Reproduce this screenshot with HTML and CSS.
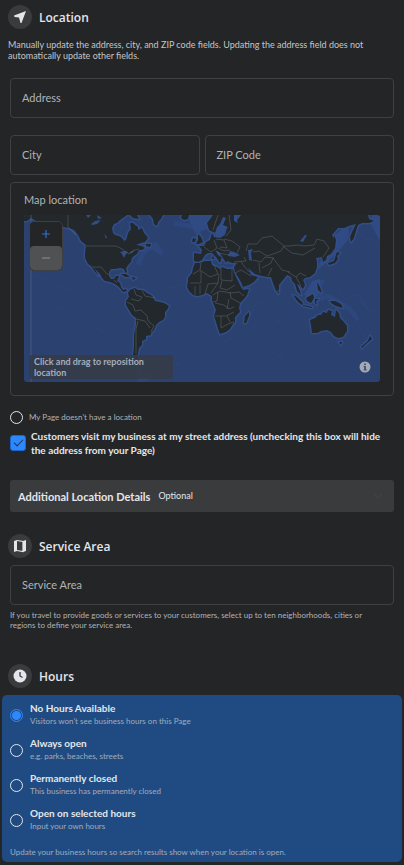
FILE: index.html
```html
<!DOCTYPE html>
<html lang="en">
<head>
    <meta charset="UTF-8">
    <meta name="viewport" content="width=device-width, initial-scale=1.0">
    <title>Edit Page Info</title>
    <link rel="stylesheet" href="styles.css">
</head>
<body>
    <main class="page">
        <!-- Location -->
        <section class="section">
            <header class="section-header">
                <span class="icon-circle">
                    <svg width="14" height="14" viewBox="0 0 14 14"><path d="M13 1 L1 5.500 L1.500 7 L6 7.500 L7.500 13 L8.500 13 Z" fill="#e4e6eb"/></svg>
                </span>
                <h2>Location</h2>
            </header>
            <p class="intro">Manually update the address, city, and ZIP code fields. Updating the address field does not automatically update other fields.</p>

            <form class="fields">
                <div class="field">
                    <label for="address">Address</label>
                    <input type="text" id="address">
                </div>
                <div class="field-row">
                    <div class="field">
                        <label for="city">City</label>
                        <input type="text" id="city">
                    </div>
                    <div class="field">
                        <label for="zip">ZIP Code</label>
                        <input type="text" id="zip">
                    </div>
                </div>
            </form>

            <div class="map-card">
                <h3>Map location</h3>
                <div class="map">
                    <svg class="map-svg" viewBox="0 0 356 167" preserveAspectRatio="xMidYMid slice">
                        <defs>
                            <g id="land">
                                <!-- North America -->
                                <path d="M0 0 H103 L99 3 L96 5 L93 8 L90 9 L88 13 L89 18 L91 20 L95 21 L98 23 L100 26 L102 25 L103 22 L104 18 L107 14 L106 8 L109 8 L111 10 L114 12 L114 15 L118 13 L120 18 L122 20 L124 23 L121 27 L117 28 L112 30 L118 31 L121 33 L118 35 L115 35 L113 39 L110 41 L108 43 L107 47 L105 49 L102 53 L103 58 L101 57 L100 54 L96 53 L91 54 L87 54 L85 57 L85 61 L87 64 L90 64 L92 61 L95 61 L93 66 L96 68 L97 72 L99 75 L102 74 L103 76 L99 77 L95 72 L91 69 L86 67 L81 66 L78 63 L76 59 L72 55 L69 51 L73 58 L75 61 L71 57 L67 51 L64 49 L61 43 L61 38 L62 30 L57 26 L54 20 L50 15 L45 13 L39 12 L34 10 L29 11 L24 14 L15 16 L22 11 L17 8 L12 6 L7 3 L3 6 L0 6 Z"/>
                                <path d="M126 0 H139 L137 4 L134 7 L133 11 L130 9 L129 4 Z M158 0 H165 L164 4 L160 5 L157 3 Z M106 0 L113 0 L115 4 L109 3 Z M122 29 L127 29 L126 32 L122 31 Z M97 59 L102 59 L106 62 L101 62 Z M108 62 L112 63 L109 65 Z"/>
                                <!-- South America -->
                                <path d="M104 78 L106 75 L111 73 L114 75 L119 75 L123 78 L127 80 L129 82 L131 86 L136 87 L140 88 L145 91 L143 95 L141 97 L141 102 L139 105 L135 107 L132 110 L130 115 L127 118 L127 120 L122 121 L122 124 L118 126 L118 130 L115 133 L114 138 L113 141 L116 145 L111 144 L109 140 L110 132 L110 120 L112 110 L112 103 L108 100 L105 95 L102 90 L102 86 L105 82 Z"/>
                                <!-- Africa -->
                                <path d="M171 48 L176 48 L181 46 L187 46 L188 50 L193 52 L196 54 L198 52 L203 54 L209 54 L211 60 L214 66 L217 72 L219 75 L225 74 L223 80 L220 84 L216 88 L215 93 L216 97 L211 102 L211 107 L209 109 L206 114 L202 117 L196 119 L194 114 L192 107 L190 101 L192 95 L189 88 L188 85 L188 81 L183 78 L178 80 L173 81 L169 80 L165 76 L163 72 L164 66 L164 63 L168 58 L169 53 Z"/>
                                <path d="M221 101 L225 97 L225 101 L222 108 L220 108 Z"/>
                                <!-- Europe and Asia -->
                                <path d="M189 0 H344 L345 4 L350 6 L345 8 L338 8 L334 10 L332 16 L330 23 L327 27 L326 22 L329 15 L332 9 L328 10 L325 11 L320 13 L314 13 L308 20 L311 25 L311 33 L307 39 L303 41 L302 45 L299 47 L298 42 L292 43 L293 47 L293 52 L291 58 L286 62 L281 63 L279 65 L281 70 L279 74 L275 70 L273 69 L276 76 L277 80 L273 76 L271 69 L268 66 L267 62 L263 60 L259 65 L255 70 L255 75 L252 76 L249 68 L247 62 L244 62 L238 61 L231 59 L224 53 L227 60 L230 61 L234 62 L230 67 L225 70 L219 72 L217 67 L211 57 L210 52 L213 48 L208 48 L203 46 L202 48 L199 43 L195 37 L191 35 L194 40 L198 43 L195 46 L192 42 L188 38 L184 38 L181 40 L178 45 L174 47 L170 46 L170 38 L177 39 L178 35 L175 31 L180 31 L182 27 L186 25 L188 18 L190 22 L196 23 L201 20 L203 13 L196 12 L192 18 L189 17 L185 15 L183 8 Z"/>
                                <path d="M174 19 L177 22 L179 27 L175 29 L172 29 L174 25 Z M169 23 L172 24 L171 27 L168 27 Z M194 45 L197 45 L196 48 Z M189 40 L190 44 L188 44 Z"/>
                                <!-- Islands and Australia -->
                                <path d="M313 37 L316 38 L313 41 L314 44 L311 48 L305 50 L304 48 L310 46 Z M310 20 L312 25 L311 33 L310 27 Z M269 80 L273 82 L279 88 L278 90 L274 87 Z M279 90 L288 92 L288 93 L279 91 Z M282 83 L289 79 L290 83 L287 88 L283 86 Z M291 84 L295 84 L292 86 L293 90 L291 88 Z M293 67 L296 72 L298 78 L294 75 Z M306 86 L311 86 L317 89 L319 93 L312 91 L307 88 Z M253 75 L255 77 L254 79 Z M346 121 L348 124 L342 129 L338 133 L337 132 L344 126 Z M315 127 L318 127 L317 130 Z"/>
                                <path d="M286 105 L291 103 L294 100 L297 100 L299 97 L303 98 L304 95 L308 96 L307 100 L311 102 L312 95 L315 98 L316 103 L320 107 L323 111 L323 116 L319 122 L314 123 L310 121 L307 117 L303 115 L297 116 L293 118 L288 118 L287 110 Z"/>
                            </g>
                        </defs>
                        <rect width="356" height="167" fill="#2b416f"/>
                        <g fill="none" stroke="#2d467b" stroke-width="5" stroke-linejoin="round">
                            <path d="M114 50 L119 38 L128 31 L137 38 L130 28 M113 145 L116 167 L128 160 M150 8 L170 12 L176 21 M300 80 L312 85 L326 94 L334 105 M300 65 L290 75 L300 85"/>
                        </g>
                        <path d="M311 20 L318 14 L325 13 L324 25 L313 38 L300 50 L293 55 L298 42 L308 39 Z M348 0 H356 V26 L346 8 Z M165 0 H190 L183 14 L172 18 L166 8 Z M288 66 L296 64 L298 76 L290 84 L280 80 Z" fill="#304b84"/>
                        <g fill="none" stroke="#304b84" stroke-opacity=".5" stroke-width="1">
                            <path d="M10 59 l12 6 M32 70 l14 6 M28 90 l9 4 M68 112 l13 5 M146 73 l13 -4 M225 102 l8 -15 l7 4 M251 108 l7 -4 M248 136 l10 7 l-5 6 M195 130 l15 -9 M148 146 l13 7 M332 15 l8 8 l14 3 M345 83 l-8 5 l13 9 M314 75 l7 9 l14 -4 l10 17 M332 108 l10 14 l-7 18"/>
                        </g>
                        <use href="#land" fill="none" stroke="#314e88" stroke-width="3" stroke-linejoin="round"/>
                        <use href="#land" fill="#22282b"/>
                        <!-- Inland seas and lakes -->
                        <g fill="#314e88">
                            <path d="M67 9 l4 -3 l6 -1 l-4 4 l-5 1 Z M62 0 l5 0 l-3 3 Z M73 0 l5 3 l-4 1 Z M96 37 l4 -1 l4 1 l-2 2 l-2 4 l-2 -4 Z M105 38 l6 -4 l-3 4 Z M80 19 l3 3 l-1 2 Z"/>
                            <path d="M204 41 L206 36 L210 37 L216 40 L211 42 Z M224 35 L229 34 L227 38 L228 46 L225 45 Z M193 12 L196 9 L199 2 L202 3 L199 10 L204 12 L201 15 L199 21 L192 22 L191 18 Z M210 0 L217 0 L213 5 L214 8 L210 6 Z M276 26 L281 20 L283 20 L279 27 Z"/>
                        </g>
                        <!-- Borders -->
                        <g fill="none" stroke="#717980" stroke-opacity=".6" stroke-width=".7" stroke-linejoin="round">
                            <path d="M44 0 V12 L52 20 M62 31 H92 L98 34 L105 39 L111 35 L115 34 M68 52 L77 52 L82 58 L85 60 M90 65 L93 68"/>
                            <path d="M110 74 L112 80 L118 82 L115 86 L107 84 M118 75 L121 81 L131 83 M103 87 L109 90 L111 96 L117 95 L123 101 L124 106 L130 111 L127 117 M112 104 L121 106 L126 113 M114 106 L112 114 L112 139"/>
                            <path d="M177 48 L176 55 L169 59 M176 55 L186 62 L194 59 L190 50 M177 56 V68 H166 M197 53 V65 L208 66 V54 M195 59 L194 68 L184 69 L181 79 M198 66 L196 73 L203 75 L211 70 M187 78 L194 68 M189 80 L196 76 L207 78 L215 77 L220 81 M194 77 L193 86 L189 87 M191 88 L200 90 L205 94 L210 92 M206 77 L207 83 L216 88 M205 84 L203 94 M191 101 L202 101 L210 97 M197 101 V113 L204 109 L210 107 M203 101 L206 107 M171 71 L171 80 M176 70 L176 79"/>
                            <path d="M180 32 L187 37 L193 33 L190 25 M192 24 L200 25 L203 33 L196 32 M194 33 L200 36 L206 35 M200 24 L208 26 L216 32 L213 38 M202 21 L207 15 L205 0 M189 15 L194 0 M194 38 L205 40 M210 47 L222 46 L220 42 M217 47 L225 57 M211 58 L217 55 L227 61 M222 36 L224 29 L233 29 L238 23 L248 21 L260 31 L266 31 L273 30 L280 31 L290 30 L293 24 L300 26 L305 33 L299 42 M260 31 L257 36 L249 39 L243 41 L235 36 L229 37 M260 32 L268 38 L279 40 L291 33 M229 45 L237 47 L241 42 L250 43 M235 48 L236 58 M238 53 L247 48 L249 43 L258 55 L266 57 M244 61 L248 53 M264 57 L272 62 L276 58 L282 61 M272 62 L277 71"/>
                        </g>
                        <path d="M7 0 V167" stroke="#526587" stroke-opacity=".7"/>
                    </svg>
                    <div class="zoom-controls">
                        <button type="button" aria-label="Zoom in">
                            <svg width="10" height="10" viewBox="0 0 10 10"><path d="M5 1 V9 M1 5 H9" stroke="#2d70d2" stroke-width="1.200"/></svg>
                        </button>
                        <button type="button" class="zoom-out" aria-label="Zoom out">
                            <svg width="10" height="10" viewBox="0 0 10 10"><path d="M1 5 H9" stroke="#85878a" stroke-width="1.200"/></svg>
                        </button>
                    </div>
                    <div class="map-hint">Click and drag to reposition location</div>
                    <button type="button" class="map-info" aria-label="Map information">
                        <svg width="12" height="12" viewBox="0 0 12 12"><circle cx="6" cy="6" r="5.500" fill="#a4aab5"/><path d="M5 2.500 H7 V4 H5 Z M4.500 5 H7 V8.500 H8 V9.500 H4.500 V8.500 H5 V6 H4.500 Z" fill="#485878"/></svg>
                    </button>
                </div>
            </div>

            <div class="choice no-location">
                <input type="radio" id="no-location">
                <label for="no-location">My Page doesn't have a location</label>
            </div>
            <div class="choice street-address">
                <input type="checkbox" id="street-address" checked>
                <label for="street-address">Customers visit my business at my street address (unchecking this box will hide the address from your Page)</label>
            </div>

            <button type="button" class="details-bar">
                <span class="details-title">Additional Location Details</span>
                <span class="details-optional">Optional</span>
                <svg width="10" height="8" viewBox="0 0 10 8"><path d="M1 2 L5 6 L9 2" fill="none" stroke="#3f4143" stroke-width="1.500"/></svg>
            </button>
        </section>

        <!-- Service Area -->
        <section class="section service">
            <header class="section-header">
                <span class="icon-circle">
                    <svg width="14" height="14" viewBox="0 0 14 14"><path d="M1 2 L4 1 V12 L1 13 Z M10 2 L13 1 V12 L10 13 Z" fill="#e4e6eb"/><path d="M4 1.500 L10 2.500 V12.500 L4 11.500" fill="none" stroke="#e4e6eb" stroke-width="1.200"/></svg>
                </span>
                <h2>Service Area</h2>
            </header>
            <div class="field service-field">
                <label for="service-area">Service Area</label>
                <input type="text" id="service-area">
            </div>
            <p class="helper">If you travel to provide goods or services to your customers, select up to ten neighborhoods, cities or regions to define your service area.</p>
        </section>

        <!-- Hours -->
        <section class="section hours">
            <header class="section-header">
                <span class="icon-circle">
                    <svg width="14" height="14" viewBox="0 0 14 14"><circle cx="7" cy="7" r="6.500" fill="#e4e6eb"/><path d="M7 3 V7 L9.500 8.500" fill="none" stroke="#3a3b3c" stroke-width="1.300"/></svg>
                </span>
                <h2>Hours</h2>
            </header>
            <div class="hours-panel">
                <div class="choice">
                    <input type="radio" name="hours" id="hours-none" checked>
                    <label for="hours-none"><strong>No Hours Available</strong><small>Visitors won't see business hours on this Page</small></label>
                </div>
                <div class="choice">
                    <input type="radio" name="hours" id="hours-always">
                    <label for="hours-always"><strong>Always open</strong><small>e.g. parks, beaches, streets</small></label>
                </div>
                <div class="choice">
                    <input type="radio" name="hours" id="hours-closed">
                    <label for="hours-closed"><strong>Permanently closed</strong><small>This business has permanently closed</small></label>
                </div>
                <div class="choice">
                    <input type="radio" name="hours" id="hours-selected">
                    <label for="hours-selected"><strong>Open on selected hours</strong><small>Input your own hours</small></label>
                </div>
                <p class="hours-note">Update your business hours so search results show when your location is open.</p>
            </div>
        </section>
    </main>
</body>
</html>
```
FILE: styles.css
```css
:root {
    --background: #242526;
    --border: #3e4042;
    --raised: #3a3b3c;
    --text: #e4e6eb;
    --text-muted: #b0b3b8;
    --accent: #2d88ff;
}

* {
    box-sizing: border-box;
}

body {
    margin: 0;
    background: var(--background);
    color: var(--text);
    font-family: Lato, "Open Sans", sans-serif;
    font-size: 10px;
}

h2, h3, p {
    margin: 0;
}

button, input {
    font-family: inherit;
}

.page {
    padding: 5px 2px 3px;
}

.section {
    padding: 0 8px;
}

.section-header {
    display: flex;
    align-items: center;
    gap: 7px;
    margin-left: -2px;
}

.section-header h2 {
    padding-top: 2px;
    font-family: "Open Sans", sans-serif;
    font-size: 12px;
    line-height: 16px;
    font-weight: 600;
}

.icon-circle {
    display: flex;
    align-items: center;
    justify-content: center;
    width: 24px;
    height: 24px;
    border-radius: 50%;
    background: var(--raised);
}

.intro {
    margin: 10px 0 0 -2px;
    font-size: 9px;
    line-height: 11px;
    color: #c3c5c9;
}

.fields {
    display: flex;
    flex-direction: column;
    gap: 17px;
    margin-top: 17px;
}

.field-row {
    display: flex;
    gap: 5px;
}

/* The label sits in the same grid cell as its input */
.field {
    display: grid;
    flex: 1;
    align-items: center;
}

.field label, .field input {
    grid-area: 1 / 1;
}

.field label {
    padding: 0 12px;
    font-size: 11px;
    line-height: 16px;
    color: var(--text-muted);
    pointer-events: none;
}

.field input {
    width: 100%;
    min-width: 0;
    height: 40px;
    padding: 0 11px;
    border: 1px solid var(--border);
    border-radius: 4px;
    background: transparent;
    color: var(--text);
    font-size: 11px;
}

/* Map */
.map-card {
    margin-top: 7px;
    padding: 9px 13px 13px;
    border: 1px solid var(--border);
    border-radius: 4px;
}

.map-card h3 {
    margin-bottom: 7px;
    font-size: 11px;
    line-height: 16px;
    font-weight: 400;
    color: var(--text-muted);
}

.map {
    position: relative;
    height: 167px;
    border-radius: 3px;
    overflow: hidden;
}

.map-svg {
    display: block;
    width: 100%;
    height: 100%;
}

.zoom-controls {
    position: absolute;
    top: 6px;
    left: 5px;
    display: flex;
    flex-direction: column;
    width: 34px;
    border: 1px solid #3d3f42;
    border-radius: 5px;
    background: #242526;
    overflow: hidden;
}

.zoom-controls button {
    display: flex;
    align-items: center;
    justify-content: center;
    height: 24px;
    padding: 0;
    border: none;
    background: transparent;
}

.zoom-controls .zoom-out {
    border-radius: 4px;
    background: #505152;
}

.map-hint {
    position: absolute;
    left: 5px;
    bottom: 3px;
    width: 144px;
    padding: 1px 5px;
    border-radius: 3px;
    background: rgba(54, 60, 70, 0.85);
    color: #a6adba;
    font-size: 9px;
    line-height: 11px;
    font-weight: 700;
}

.map-info {
    position: absolute;
    right: 9px;
    bottom: 9px;
    display: flex;
    padding: 0;
    border: none;
    background: none;
}

/* Radios and checkboxes */
.choice {
    display: flex;
    align-items: center;
    gap: 6px;
}

input[type="radio"], input[type="checkbox"] {
    appearance: none;
    flex: none;
    margin: 0;
}

input[type="radio"] {
    width: 13px;
    height: 13px;
    border: 1px solid var(--text);
    border-radius: 50%;
}

input[type="radio"]:checked {
    border-color: var(--accent);
    background: radial-gradient(var(--accent) 0 4px, transparent 5px);
}

input[type="checkbox"] {
    display: flex;
    width: 16px;
    height: 16px;
    border: 1px solid #1b66c9;
    border-radius: 3px;
    background: var(--accent);
}

input[type="checkbox"]:checked::after {
    content: "";
    width: 4px;
    height: 8px;
    margin: 1px auto 0;
    border: solid #1f3554;
    border-width: 0 1px 1px 0;
    transform: rotate(45deg);
}

.no-location {
    margin-top: 13px;
    font-size: 8px;
    line-height: 16px;
    color: var(--text-muted);
}

.street-address {
    gap: 5px;
    margin-top: 4px;
    font-size: 10px;
    line-height: 14px;
    font-weight: 700;
}

.details-bar {
    display: flex;
    align-items: center;
    gap: 8px;
    width: 100%;
    height: 32px;
    margin-top: 23px;
    padding: 0 11px 0 8px;
    border: none;
    border-radius: 3px;
    background: var(--raised);
    color: var(--text);
    text-align: left;
}

.details-title {
    font-size: 11px;
    font-weight: 700;
}

.details-optional {
    flex: 1;
    padding-bottom: 2px;
    font-size: 9px;
}

.service {
    margin-top: 22px;
}

.service-field {
    margin-top: 7px;
}

.helper {
    margin-top: 5px;
    padding-right: 16px;
    font-size: 8px;
    line-height: 10px;
    color: var(--text-muted);
}

.hours {
    margin-top: 34px;
}

.hours-panel {
    display: flex;
    flex-direction: column;
    gap: 9px;
    margin: 7px -8px 0;
    padding: 7px 8px 4px;
    border-radius: 5px;
    background: #204b82;
}

.hours-panel .choice {
    gap: 7px;
}

.hours-panel strong, .hours-panel small {
    display: block;
    line-height: 13px;
}

.hours-panel strong {
    font-size: 10px;
    font-weight: 700;
}

.hours-panel small, .hours-note {
    font-size: 8px;
    color: #a0abbc;
}

.hours-note {
    margin-top: 4px;
    line-height: 12px;
}
```
